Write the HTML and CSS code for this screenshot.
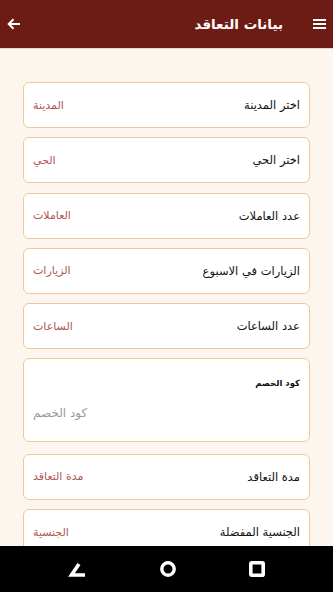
FILE: index.html
```html
<!DOCTYPE html>
<html lang="ar" dir="rtl">
<head>
    <meta charset="UTF-8">
    <meta name="viewport" content="width=device-width, initial-scale=1.0">
    <title>بيانات التعاقد</title>
    <link rel="stylesheet" href="styles.css">
</head>
<body>
    <div class="screen">
        <header class="topbar">
            <button class="icon-btn menu" aria-label="menu">
                <svg width="13" height="12" viewBox="0 0 13 12"><rect x="0" y="1" width="13" height="2" fill="#fff"/><rect x="0" y="5" width="13" height="2" fill="#fff"/><rect x="0" y="9" width="13" height="2" fill="#fff"/></svg>
            </button>
            <h1>بيانات التعاقد</h1>
            <button class="icon-btn back" aria-label="back">
                <svg width="14" height="12" viewBox="0 0 14 12"><path d="M13 6H2M6.5 1.2L1.7 6l4.8 4.8" stroke="#fff" stroke-width="2" fill="none"/></svg>
            </button>
        </header>

        <main class="content">
            <div class="field">
                <label>اختر المدينة</label>
                <span class="ph">المدينة</span>
            </div>
            <div class="field">
                <label>اختر الحي</label>
                <span class="ph">الحي</span>
            </div>
            <div class="field">
                <label>عدد العاملات</label>
                <span class="ph">العاملات</span>
            </div>
            <div class="field">
                <label>الزيارات في الاسبوع</label>
                <span class="ph">الزيارات</span>
            </div>
            <div class="field">
                <label>عدد الساعات</label>
                <span class="ph">الساعات</span>
            </div>
            <div class="code-box">
                <div class="code-label">كود الخصم</div>
                <div class="code-ph">كود الخصم</div>
            </div>
            <div class="field">
                <label>مدة التعاقد</label>
                <span class="ph">مدة التعاقد</span>
            </div>
            <div class="field">
                <label>الجنسية المفضلة</label>
                <span class="ph">الجنسية</span>
            </div>
        </main>

        <nav class="navbar">
            <svg width="19" height="15" viewBox="0 0 19 15"><path d="M18 13H4.5L12 2" stroke="#fff" stroke-width="3.6" fill="none"/></svg>
            <svg width="16" height="16" viewBox="0 0 16 16"><circle cx="8" cy="8" r="6.2" stroke="#fff" stroke-width="3.4" fill="none"/></svg>
            <svg width="16" height="16" viewBox="0 0 16 16"><rect x="1.8" y="1.8" width="12.4" height="12.4" rx="1" stroke="#fff" stroke-width="3.6" fill="none"/></svg>
        </nav>
    </div>
</body>
</html>
```

FILE: styles.css
```css
body {
    margin: 0;
    background-color: #fdf6ef;
    font-family: "DejaVu Sans", sans-serif;
}
.screen {
    width: 333px;
    height: 592px;
    display: flex;
    flex-direction: column;
    overflow: hidden;
}
.topbar {
    height: 49px;
    flex-shrink: 0;
    background-color: #6d1c15;
    border-bottom: 1px solid #e8d6cc;
    display: flex;
    align-items: center;
    padding: 0 7px;
    box-sizing: border-box;
}
.topbar h1 {
    margin: 0 30px 0 0;
    color: #ffffff;
    font-size: 13.5px;
    font-weight: bold;
    flex: 1;
}
.icon-btn {
    background: none;
    border: none;
    padding: 0;
    display: flex;
    cursor: pointer;
}
.content {
    flex: 1;
    overflow: hidden;
    padding: 33px 23px 0;
    display: flex;
    flex-direction: column;
    gap: 9.3px;
}
.field {
    height: 46px;
    flex-shrink: 0;
    box-sizing: border-box;
    background-color: #ffffff;
    border: 1px solid #ecc99c;
    border-radius: 6px;
    display: flex;
    align-items: center;
    justify-content: space-between;
    padding: 0 9px;
}
.field label {
    color: #111111;
    font-size: 11.5px;
}
.field .ph {
    color: #b05852;
    font-size: 11px;
}
.code-box {
    height: 84px;
    flex-shrink: 0;
    box-sizing: border-box;
    background-color: #ffffff;
    border: 1px solid #ecc99c;
    border-radius: 6px;
    padding: 17px 9px 0;
    margin-bottom: 2px;
}
.code-label {
    color: #111111;
    font-size: 8.5px;
    font-weight: bold;
    line-height: 14px;
    margin-bottom: 14px;
}
.code-ph {
    color: #9a9a9a;
    font-size: 12px;
    line-height: 18px;
    text-align: left;
}
.navbar {
    height: 46px;
    flex-shrink: 0;
    background-color: #000000;
    display: flex;
    align-items: center;
    justify-content: space-between;
    padding: 0 68px 0 67px;
    direction: ltr;
}
```
